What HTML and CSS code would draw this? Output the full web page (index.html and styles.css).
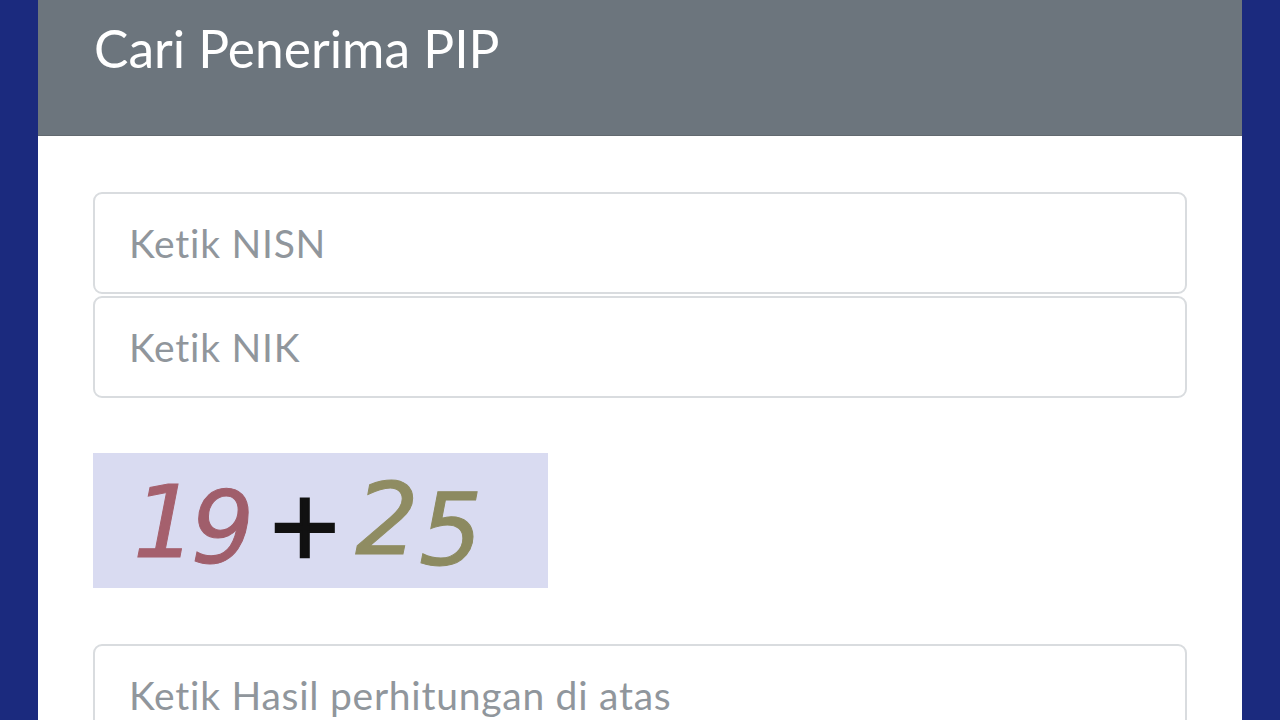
FILE: index.html
```html
<!DOCTYPE html>
<html lang="id">
<head>
<meta charset="utf-8">
<title>Cari Penerima PIP</title>
<link rel="stylesheet" href="styles.css">
</head>
<body>
<div class="page">
  <div class="card">
    <div class="card-header">
      <h1 class="title">Cari Penerima PIP</h1>
    </div>
    <div class="card-body">
      <div class="stack">
        <input class="field" type="text" placeholder="Ketik NISN">
        <input class="field" type="text" placeholder="Ketik NIK">
      </div>
      <div class="captcha">
        <span class="d d1">1</span><span class="d d2">9</span><span class="op">+</span><span class="d d3">2</span><span class="d d4">5</span>
      </div>
      <input class="field last" type="text" placeholder="Ketik Hasil perhitungan di atas">
    </div>
  </div>
</div>
</body>
</html>
```

FILE: styles.css
```css
html, body {
  margin: 0;
  padding: 0;
  height: 100%;
  overflow: hidden;
}
body {
  background: #1b2a7e;
  font-family: "Lato", "Open Sans", sans-serif;
  font-variant-ligatures: none;
}
.page {
  padding: 0 38px;
}
.card {
  background: #ffffff;
  min-height: 720px;
}
.card-header {
  background: #6c757d;
  height: 135px;
  border-bottom: 1px solid #62696f;
  padding: 0 56px;
  box-sizing: content-box;
}
.title {
  margin: 0;
  padding-top: 17px;
  font-weight: 400;
  font-size: 51.5px;
  line-height: 62px;
  color: #ffffff;
  letter-spacing: 0;
  font-variant-ligatures: none;
}
.card-body {
  padding: 56px 55px;
  display: flex;
  flex-direction: column;
}
.stack {
  display: flex;
  flex-direction: column;
  gap: 2px;
}
.field {
  display: block;
  box-sizing: border-box;
  width: 100%;
  height: 102px;
  margin: 0;
  border: 2px solid #d9dcdf;
  border-radius: 9px;
  padding: 0 34px;
  font-family: "Lato", "Open Sans", sans-serif;
  font-variant-ligatures: none;
  font-size: 39px;
  letter-spacing: 0.75px;
  color: #495057;
  background: #ffffff;
  outline: none;
}
.field::placeholder {
  color: #90969c;
  opacity: 1;
}
.captcha {
  width: 455px;
  height: 135px;
  margin: 55px 0 56px;
  background: #d9dbf1;
  box-sizing: border-box;
  padding: 22px 0 0 40px;
  font-family: "DejaVu Sans", sans-serif;
  font-style: italic;
  font-size: 100px;
  line-height: 100px;
  white-space: nowrap;
}
.d, .op {
  display: inline-block;
  -webkit-text-stroke: 1px currentColor;
}
.d1 { color: #a5606d; transform: translateY(-2px); letter-spacing: -6px; }
.d2 { color: #a05e6b; transform: translateY(4px); letter-spacing: 2px; }
.op { color: #111111; font-style: normal; font-size: 92px; margin: 0 12px 0 10px; transform: translateY(-2px); -webkit-text-stroke: 2.5px #111111; }
.d3 { color: #8f8c62; transform: translateY(-5px); letter-spacing: 0; }
.d4 { color: #8c8a60; transform: translateY(6px); }
```
